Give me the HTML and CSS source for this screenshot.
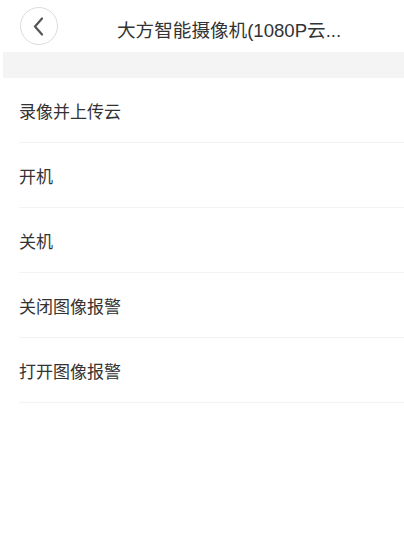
FILE: index.html
```html
<!DOCTYPE html>
<html lang="zh-CN">
<head>
<meta charset="utf-8">
<title>大方智能摄像机</title>
<link rel="stylesheet" href="styles.css">
</head>
<body>
<div class="page">
  <header class="topbar">
    <button class="back" aria-label="返回">
      <svg width="11" height="19" viewBox="0 0 11 19"><path d="M9 1.5 L2 9.5 L9 17.5" fill="none" stroke="#555" stroke-width="2.2" stroke-linecap="round" stroke-linejoin="round"/></svg>
    </button>
    <div class="title">大方智能摄像机(1080P云...</div>
  </header>
  <div class="band"></div>
  <ul class="list">
    <li class="item">录像并上传云</li>
    <li class="item">开机</li>
    <li class="item">关机</li>
    <li class="item">关闭图像报警</li>
    <li class="item">打开图像报警</li>
  </ul>
</div>
</body>
</html>
```

FILE: styles.css
```css
html, body {
  margin: 0;
  padding: 0;
  background: #fff;
}
body {
  font-family: "Liberation Sans", "Noto Sans CJK SC", sans-serif;
  color: #333;
}
.page {
  width: 404px;
  min-height: 549px;
}
.topbar {
  height: 52px;
  display: flex;
  align-items: center;
  box-sizing: border-box;
  padding-left: 20px;
}
.back {
  width: 38px;
  height: 38px;
  margin-top: 0;
  border: 1px solid #dcdcdc;
  border-radius: 50%;
  background: #fff;
  display: flex;
  align-items: center;
  justify-content: center;
  padding: 0 2px 0 0;
  box-sizing: border-box;
}
.title {
  margin-left: 59px;
  margin-top: 4px;
  font-size: 18.6px;
  color: #333;
  white-space: nowrap;
}
.band {
  height: 26px;
  margin-left: 3px;
  background: #f4f4f4;
}
.list {
  list-style: none;
  margin: 0;
  padding: 0 0 0 19px;
}
.item {
  height: 64px;
  display: flex;
  align-items: center;
  font-size: 17px;
  color: #333;
  border-bottom: 1px solid #f3f3f3;
}
```
